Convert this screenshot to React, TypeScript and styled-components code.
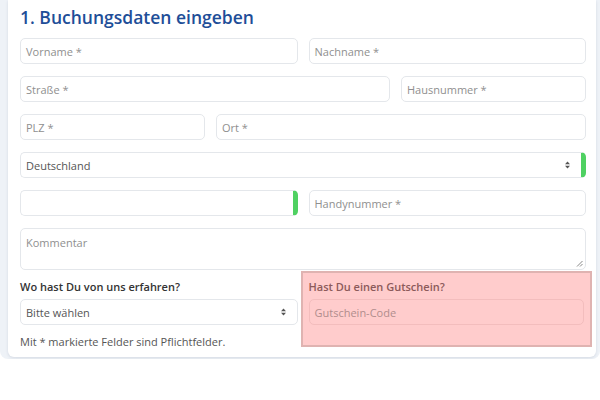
import React from 'react';
import styled, { createGlobalStyle } from 'styled-components';

const GlobalStyle = createGlobalStyle`
  html, body {
    margin: 0;
    padding: 0;
    background: #ffffff;
    font-family: "Open Sans", "Noto Sans", sans-serif;
  }
  * {
    box-sizing: border-box;
  }
`;

const Backdrop = styled.div`
  width: 600px;
  background: #eef2f7;
  padding: 0 4px 2px 8px;
  border-radius: 0 0 8px 8px;
`;

const Card = styled.form`
  background: #ffffff;
  border-radius: 0 0 6px 6px;
  box-shadow: 0 1px 3px rgba(30, 50, 90, 0.12);
  padding: 4px 10px 7px 12px;
`;

const Title = styled.h2`
  margin: 0 0 8px;
  font-size: 17.5px;
  line-height: 26px;
  font-weight: 600;
  color: #1e4e98;
`;

const Row = styled.div<{ cols: string }>`
  display: grid;
  grid-template-columns: ${p => p.cols};
  column-gap: 11px;
  margin-bottom: 12px;
`;

const Field = styled.div<{ valid?: boolean }>`
  position: relative;
  height: 26px;
  display: flex;
  align-items: center;
  padding: 0 5px;
  background: #ffffff;
  border: 1px solid #e4e7eb;
  border-radius: 5px;
  font-size: 11px;
  color: #8f8f8f;
  ${p => p.valid && `
    border-right: 5px solid #4fd162;
  `}
`;

const Value = styled.span`
  color: #555555;
  flex: 1;
`;

const Placeholder = styled.span`
  flex: 1;
`;

const SelectArrows = styled.svg`
  width: 5px;
  height: 8px;
  margin-right: 6px;
`;

const TextArea = styled.div`
  position: relative;
  height: 42px;
  padding: 6px 5px;
  border: 1px solid #e4e7eb;
  border-radius: 5px;
  font-size: 11px;
  color: #8f8f8f;
`;

const Grip = styled.svg`
  position: absolute;
  right: 2px;
  bottom: 2px;
  width: 7px;
  height: 7px;
`;

const BottomRow = styled.div`
  display: grid;
  grid-template-columns: 1fr 1fr;
  column-gap: 11px;
  margin-top: 1px;
`;

const Column = styled.div`
  padding-top: 8px;
`;

const Label = styled.div<{ tone?: string }>`
  font-size: 11px;
  line-height: 16px;
  font-weight: 600;
  color: ${p => p.tone || '#333333'};
  margin-bottom: 4px;
`;

const Note = styled.p`
  margin: 9px 0 0;
  font-size: 11px;
  line-height: 16px;
  color: #555555;
`;

const Voucher = styled.div`
  margin: 0 -6px 0 -8px;
  padding: 6px 6px 0 6px;
  height: 76px;
  background: #ffcccc;
  border: 2px solid #dfb3b1;
`;

const VoucherInput = styled.div`
  height: 26px;
  display: flex;
  align-items: center;
  padding: 0 5px;
  border: 1px solid #f3bdbd;
  border-radius: 5px;
  font-size: 11px;
  color: #b18c8c;
`;

const Arrows = () => (
  <SelectArrows viewBox="0 0 5 8">
    <path d="M2.5 0.5 L5 3.3 L0 3.3 Z" fill="#555" />
    <path d="M2.5 7.5 L5 4.7 L0 4.7 Z" fill="#555" />
  </SelectArrows>
);

const App: React.FC = () => {
  return (
    <>
      <GlobalStyle />
      <Backdrop>
        <Card>
          <Title>1. Buchungsdaten eingeben</Title>
          <Row cols="1fr 1fr">
            <Field><Placeholder>Vorname *</Placeholder></Field>
            <Field><Placeholder>Nachname *</Placeholder></Field>
          </Row>
          <Row cols="2fr 1fr">
            <Field><Placeholder>Straße *</Placeholder></Field>
            <Field><Placeholder>Hausnummer *</Placeholder></Field>
          </Row>
          <Row cols="1fr 2fr">
            <Field><Placeholder>PLZ *</Placeholder></Field>
            <Field><Placeholder>Ort *</Placeholder></Field>
          </Row>
          <Row cols="1fr">
            <Field valid>
              <Value>Deutschland</Value>
              <Arrows />
            </Field>
          </Row>
          <Row cols="1fr 1fr">
            <Field valid />
            <Field><Placeholder>Handynummer *</Placeholder></Field>
          </Row>
          <TextArea>
            Kommentar
            <Grip viewBox="0 0 7 7">
              <path d="M6.5 1 L1 6.5 M6.5 4 L4 6.5" stroke="#888" strokeWidth="1" />
            </Grip>
          </TextArea>
          <BottomRow>
            <Column>
              <Label>Wo hast Du von uns erfahren?</Label>
              <Field>
                <Value>Bitte wählen</Value>
                <Arrows />
              </Field>
              <Note>Mit * markierte Felder sind Pflichtfelder.</Note>
            </Column>
            <Voucher>
              <Label tone="#8c5a5a">Hast Du einen Gutschein?</Label>
              <VoucherInput>Gutschein-Code</VoucherInput>
            </Voucher>
          </BottomRow>
        </Card>
      </Backdrop>
    </>
  );
};

export default App;
